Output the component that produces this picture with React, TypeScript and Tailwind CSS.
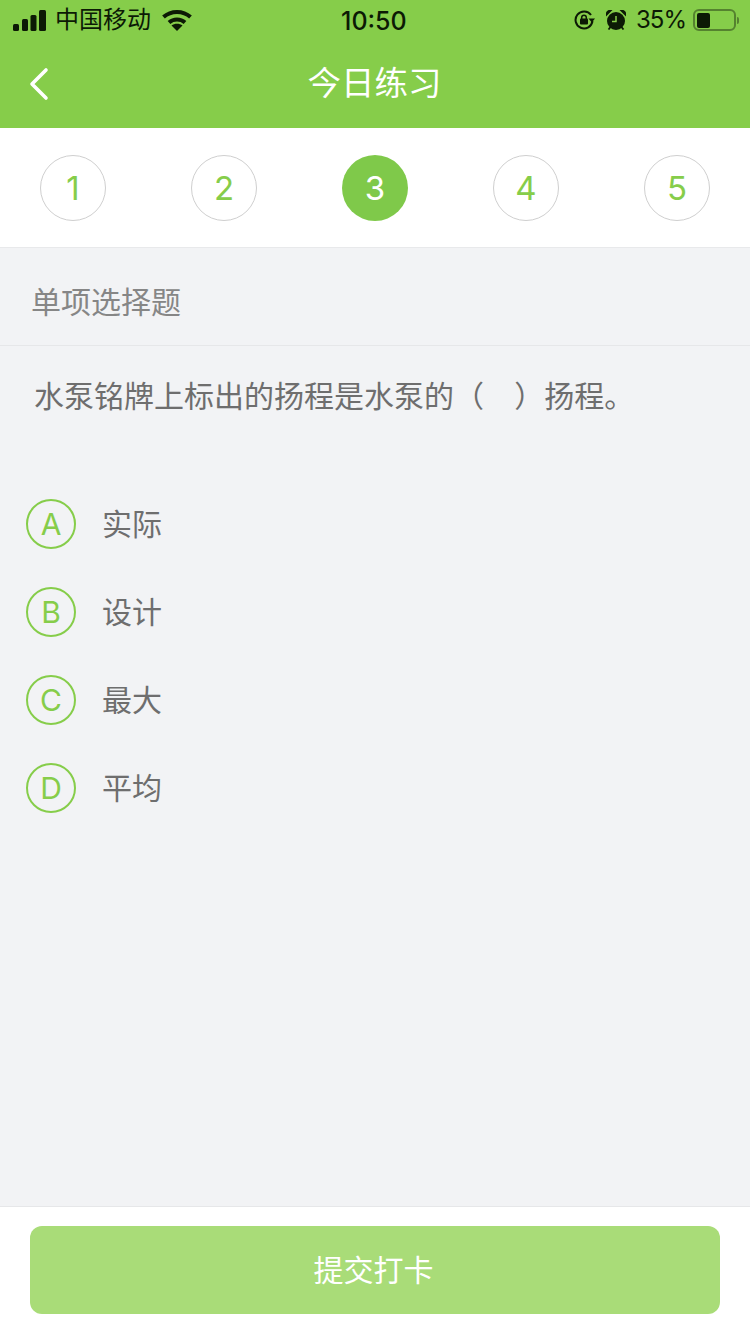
const font = "font-['Inter','Noto_Sans_CJK_SC',sans-serif]";

const steps = [1, 2, 3, 4, 5];
const options = [
  { key: "A", label: "实际" },
  { key: "B", label: "设计" },
  { key: "C", label: "最大" },
  { key: "D", label: "平均" },
];

function StatusBar() {
  return (
    <div className="relative flex h-10 items-center justify-between pl-[13px] pr-[11px] text-[#0c1a05]">
      <div className="flex items-center">
        <svg width="33" height="21" viewBox="0 0 33 21" fill="currentColor">
          <rect x="0" y="14" width="6" height="7" rx="1.500" />
          <rect x="9" y="9" width="6" height="12" rx="1.500" />
          <rect x="17.500" y="5" width="6" height="16" rx="1.500" />
          <rect x="26" y="0" width="7" height="21" rx="1.500" />
        </svg>
        <span className="ml-[9px] text-[24px] leading-none">中国移动</span>
        <svg className="ml-[11px]" width="30" height="22" viewBox="0 0 30 22" fill="none" stroke="currentColor" strokeWidth="4">
          <path d="M1.500 8C9 1.200 21 1.200 28.500 8" />
          <path d="M7 13.500C11.500 9.500 18.500 9.500 23 13.500" />
          <path d="M15 22L9.500 16.500C12.500 14.300 17.500 14.300 20.500 16.500Z" fill="currentColor" stroke="none" />
        </svg>
      </div>
      <span className="absolute left-[341px] top-[6px] text-[25px] font-medium leading-[30px]">10:50</span>
      <div className="flex items-center">
        <svg width="21" height="20" viewBox="0 0 21 20" fill="none" stroke="currentColor" strokeWidth="2">
          <path d="M17 5A8.500 8.500 0 1 0 18.500 11" />
          <path d="M14.500 8.500h6.500l-3.200 4z" fill="currentColor" stroke="none" />
          <rect x="6" y="8.500" width="8" height="6" rx="1" fill="currentColor" stroke="none" />
          <path d="M7.700 9V7.500a2.300 2.300 0 0 1 4.600 0V9" strokeWidth="1.500" />
        </svg>
        <svg className="ml-[11px]" width="20" height="20" viewBox="0 0 20 20" fill="currentColor">
          <circle cx="10" cy="11" r="9" />
          <path d="M0 6.500a5 5 0 0 1 6.500-6.500zM20 6.500a5 5 0 0 0-6.500-6.500z" />
          <path d="M10 6v5.500H6" fill="none" stroke="#86cd4a" strokeWidth="1.500" />
          <path d="M4.500 17l-2 2.500M15.500 17l2 2.500" stroke="currentColor" strokeWidth="1.800" />
        </svg>
        <span className="ml-[10px] text-[24px] leading-none tracking-[-1px]">35%</span>
        <div className="ml-[7px] flex items-center">
          <div className="h-[22px] w-[43px] rounded-[6px] border-2 border-[#55822f] p-[1.500px]">
            <div className="h-full w-[13px] rounded-[2px] bg-[#0c1a05]" />
          </div>
          <div className="ml-[1px] h-[7px] w-[2px] rounded-r-sm bg-[#55822f]" />
        </div>
      </div>
    </div>
  );
}

export default function App() {
  return (
    <div className={`${font} flex h-[1334px] w-[750px] flex-col bg-[#f2f3f5]`}>
      <header className="h-[128px] bg-[#86cd4a]">
        <StatusBar />
        <div className="relative flex h-[88px] items-center justify-center pb-[1px] pr-[1px]">
          <svg className="absolute left-[27px] top-[27px]" width="24" height="34" viewBox="0 0 24 34" fill="none" stroke="white" strokeWidth="3.600" strokeLinecap="round" strokeLinejoin="round">
            <path d="M19 3L5 17l14 14" />
          </svg>
          <h1 className="text-[33.500px] font-normal leading-none text-white">今日练习</h1>
        </div>
      </header>

      <div className="flex h-[120px] items-start justify-between border-b border-[#e8e9eb] bg-white px-[40px] pt-[27px]">
        {steps.map((n) => (
          <div
            key={n}
            className={
              n === 3
                ? "flex h-[66px] w-[66px] items-center justify-center rounded-full bg-[#7fc94a] pt-[1px] text-[33px] text-white"
                : "flex h-[66px] w-[66px] items-center justify-center rounded-full border border-[#cfcfcf] pt-[1px] text-[33px] text-[#86cd4a]"
            }
          >
            {n}
          </div>
        ))}
      </div>

      <div className="flex h-[98px] items-center border-b border-[#e6e7e9] pl-[31px] pt-[11px] text-[30px] text-[#868686]">
        单项选择题
      </div>

      <p className="mt-[30px] pl-[34px] text-[30px] leading-[40px] text-[#6e6e6e]">
        水泵铭牌上标出的扬程是水泵的（&nbsp;&nbsp;&nbsp;<span className="ml-[5px]">）扬程。</span>
      </p>

      <ul className="mt-[83px] flex flex-col gap-[38px] pl-[26px]">
        {options.map((o) => (
          <li key={o.key} className="flex items-center">
            <span className="flex h-[50px] w-[50px] items-center justify-center rounded-full border-2 border-[#86cd4a] text-[30px] text-[#86cd4a]">
              {o.key}
            </span>
            <span className="ml-[26px] text-[30px] leading-none text-[#6e6e6e]">{o.label}</span>
          </li>
        ))}
      </ul>

      <footer className="mt-auto flex h-[128px] items-start justify-center border-t border-[#e6e7e9] bg-white pt-[19px]">
        <button className="flex h-[88px] w-[690px] items-center justify-center rounded-[12px] bg-[#a9dc78] pr-[3px] text-[30px] text-white">
          提交打卡
        </button>
      </footer>
    </div>
  );
}
